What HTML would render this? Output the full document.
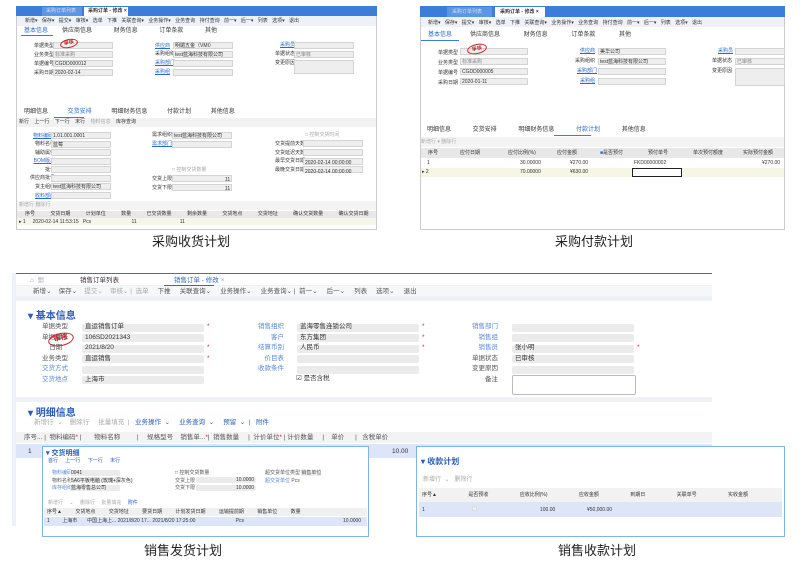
<!DOCTYPE html>
<html><head><meta charset="utf-8"><style>
*{margin:0;padding:0;box-sizing:border-box}
body{width:800px;height:565px;background:#fff;position:relative;overflow:hidden;font-family:"Liberation Sans","Noto Sans CJK SC",sans-serif;color:#333}
.a{position:absolute;white-space:nowrap}
.t{font-size:5px;line-height:7px}
.in{position:absolute;background:#eeeeee;border:1px solid #d4d4d4;height:7px}
.lk{color:#2a6acb;text-decoration:underline}
.cap{position:absolute;font-size:13px;color:#222;font-family:"Liberation Sans","Noto Sans CJK SC",sans-serif}
.s{font-size:6.5px;line-height:9px}
.in2{position:absolute;background:#ebebeb;border-radius:2px;height:8px}
.stamp{position:absolute;border:1.5px solid #c0262b;border-radius:50%;color:#c0262b;font-size:5px;font-weight:bold;text-align:center;transform:rotate(-12deg)}
</style></head><body>

<!-- Panel 1 -->
<div class="a" style="left:16px;top:6px;width:361px;height:224px;border:1px solid #ccc;background:#fff"></div>
<div class="a" style="left:16px;top:6px;width:361px;height:10px;background:#3b7dd8"></div>
<div class="a" style="left:42px;top:7px;width:40px;height:9px;background:#5b97e3"></div>
<div class="a t" style="left:46px;top:8px;color:#dde">采购订单列表</div>
<div class="a" style="left:84px;top:7px;width:44px;height:9px;background:#fff"></div>
<div class="a t" style="left:88px;top:8px;font-weight:bold">采购订单 - 修改 ×</div>
<div class="a" style="left:17px;top:16px;width:359px;height:10px;background:#eef2f8"></div>
<div class="a t" style="left:25px;top:18px;word-spacing:3px">新增▾ 保存▾ 提交▾ 审核▾ 选单 下推 关联查询▾ 业务操作▾ 业务查询 持付查询 前一▾ 后一▾ 列表 选项▾ 退出</div>
<div class="a" style="left:21px;top:35px;width:32px;height:1px;background:#3b7dd8"></div>
<div class="a t" style="left:24px;top:28px;color:#2a6acb;font-size:6px">基本信息</div>
<div class="a t" style="left:62px;top:28px;font-size:6px;word-spacing:20px">供应商信息 财务信息 订单条款 其他</div>
<div class="a t" style="left:34px;top:42px;line-height:9px;text-align:right">单据类型<br>业务类型<br>单据编号<br>采购日期</div>
<div class="in" style="left:53px;top:42px;width:60px"></div><div class="in" style="left:53px;top:51px;width:60px"></div><div class="in" style="left:53px;top:60px;width:60px"></div><div class="in" style="left:53px;top:69px;width:60px"></div>
<div class="a t" style="left:55px;top:52px;color:#888">标准采购</div><div class="a t" style="left:55px;top:61px">CGDD000012</div><div class="a t" style="left:55px;top:70px">2020-02-14</div>
<div class="stamp" style="left:60px;top:39px;width:18px;height:9px;line-height:7px">审核</div>
<div class="a t lk" style="left:155px;top:42px;line-height:9px">供应商</div><div class="a t" style="left:155px;top:51px">采购组织</div><div class="a t lk" style="left:155px;top:60px">采购部门</div><div class="a t lk" style="left:155px;top:69px">采购组</div>
<div class="in" style="left:173px;top:42px;width:60px"></div><div class="in" style="left:173px;top:51px;width:60px"></div><div class="in" style="left:173px;top:60px;width:60px"></div><div class="in" style="left:173px;top:69px;width:60px"></div>
<div class="a t" style="left:175px;top:43px">明媚五金（VMI）</div><div class="a t" style="left:175px;top:52px">test蓝海科技有限公司</div>
<div class="a t lk" style="left:280px;top:42px">采购员</div><div class="a t" style="left:275px;top:51px">单据状态</div><div class="a t" style="left:275px;top:60px">变更原因</div>
<div class="in" style="left:294px;top:42px;width:60px"></div><div class="in" style="left:294px;top:51px;width:60px"></div><div class="in" style="left:294px;top:60px;width:60px;height:14px"></div>
<div class="a t" style="left:296px;top:52px;color:#888">已审核</div>
<div class="a t" style="left:24px;top:109px;font-size:6px;word-spacing:18px">明细信息 <span style="color:#2a6acb">交货安排</span> 明细财务信息 付款计划 其他信息</div>
<div class="a" style="left:54px;top:117px;width:30px;height:1px;background:#3b7dd8"></div>
<div class="a" style="left:17px;top:118px;width:359px;height:9px;background:#f2f2f2"></div>
<div class="a t" style="left:19px;top:119px;word-spacing:4px">新行 上一行 下一行 末行 <span style="color:#aaa">物料信息</span> 库存查询</div>
<div class="a t lk" style="left:33px;top:132px;line-height:8.6px">物料编码</div>
<div class="a t" style="left:30px;top:140px;line-height:8.6px;text-align:right">物料名称<br>辅助属性<br><span class="lk">BOM版本</span><br>批号<br>供应商批号<br>货主组织<br><span class="lk">收料部门</span></div>
<div class="in" style="left:51px;top:132px;width:60px"></div><div class="in" style="left:51px;top:141px;width:60px"></div><div class="in" style="left:51px;top:149px;width:60px"></div><div class="in" style="left:51px;top:158px;width:60px"></div><div class="in" style="left:51px;top:166px;width:60px"></div><div class="in" style="left:51px;top:175px;width:60px"></div><div class="in" style="left:51px;top:183px;width:60px"></div><div class="in" style="left:51px;top:192px;width:60px"></div>
<div class="a t" style="left:53px;top:133px">1.01.001.0001</div><div class="a t" style="left:53px;top:142px">蓝莓</div><div class="a t" style="left:53px;top:184px">test蓝海科技有限公司</div>
<div class="a t" style="left:152px;top:132px">需求组织</div><div class="a t lk" style="left:152px;top:141px">需求部门</div>
<div class="in" style="left:172px;top:132px;width:60px"></div><div class="in" style="left:172px;top:141px;width:60px"></div>
<div class="a t" style="left:174px;top:133px">test蓝海科技有限公司</div>
<div class="a t" style="left:172px;top:167px;color:#aaa">□ 控制交货数量</div>
<div class="a t" style="left:152px;top:175px;line-height:8.6px">交货上限<br>交货下限</div>
<div class="in" style="left:172px;top:175px;width:60px"></div><div class="in" style="left:172px;top:184px;width:60px"></div>
<div class="a t" style="left:225px;top:176px;line-height:8.6px">11<br>11</div>
<div class="a t" style="left:305px;top:132px;color:#aaa">□ 控制交货时间</div>
<div class="a t" style="left:275px;top:140px;line-height:8.6px">交货提前天数<br>交货延迟天数<br>最早交货日期<br>最晚交货日期</div>
<div class="in" style="left:303px;top:140px;width:60px"></div><div class="in" style="left:303px;top:149px;width:60px"></div><div class="in" style="left:303px;top:158px;width:60px"></div><div class="in" style="left:303px;top:166px;width:60px"></div>
<div class="a t" style="left:305px;top:159px;line-height:8.6px">2020-02-14 00:00:00<br>2020-02-14 00:00:00</div>
<div class="a" style="left:17px;top:201px;width:359px;height:9px;background:#f4f4f4"></div>
<div class="a t" style="left:19px;top:202px;color:#aaa">新增行 删除行</div>
<div class="a" style="left:17px;top:211px;width:359px;height:7px;background:#e8e8e8"></div>
<div class="a t" style="left:25px;top:211px;word-spacing:14px">序号 交货日期 计划单位 数量 已交货数量 剩余数量 交货地点 交货地址 确认交货数量 确认交货日期</div>
<div class="a" style="left:17px;top:218px;width:359px;height:7px;background:#f6f6e8"></div>
<div class="a t" style="left:19px;top:219px">▸ 1 &nbsp; &nbsp; 2020-02-14 11:53:15 &nbsp; Pcs &nbsp; &nbsp; &nbsp; &nbsp; &nbsp; &nbsp; &nbsp; &nbsp; &nbsp; &nbsp; &nbsp; &nbsp; &nbsp; &nbsp; 11 &nbsp; &nbsp; &nbsp; &nbsp; &nbsp; &nbsp; &nbsp; &nbsp; &nbsp; &nbsp; &nbsp; &nbsp; &nbsp; &nbsp; &nbsp; 11</div>
<div class="cap" style="left:152px;top:231px">采购收货计划</div>

<!-- Panel 2 -->
<div class="a" style="left:420px;top:6px;width:365px;height:224px;border:1px solid #ccc;background:#fff"></div>
<div class="a" style="left:420px;top:6px;width:365px;height:11px;background:#3b7dd8"></div>
<div class="a" style="left:447px;top:7px;width:45px;height:10px;background:#5b97e3"></div>
<div class="a t" style="left:452px;top:9px;color:#dde">采购订单列表</div>
<div class="a" style="left:495px;top:7px;width:50px;height:10px;background:#fff"></div>
<div class="a t" style="left:500px;top:9px;font-weight:bold">采购订单 - 修改 ×</div>
<div class="a" style="left:421px;top:17px;width:363px;height:10px;background:#eef2f8"></div>
<div class="a t" style="left:428px;top:20px;word-spacing:3px">新增▾ 保存▾ 提交▾ 审核▾ 选单 下推 关联查询▾ 业务操作▾ 业务查询 持付查询 前一▾ 后一▾ 列表 选项▾ 退出</div>
<div class="a t" style="left:428px;top:32px;color:#2a6acb;font-size:6px">基本信息</div>
<div class="a" style="left:421px;top:40px;width:38px;height:1px;background:#3b7dd8"></div>
<div class="a t" style="left:470px;top:32px;font-size:6px;word-spacing:22px">供应商信息 财务信息 订单条款 其他</div>
<div class="a t" style="left:438px;top:48px;line-height:10px">单据类型<br>业务类型<br>单据编号<br>采购日期</div>
<div class="in" style="left:460px;top:48px;width:68px"></div><div class="in" style="left:460px;top:58px;width:68px"></div><div class="in" style="left:460px;top:68px;width:68px"></div><div class="in" style="left:460px;top:78px;width:68px"></div>
<div class="a t" style="left:462px;top:59px;color:#888">标准采购</div><div class="a t" style="left:462px;top:69px">CGDD000005</div><div class="a t" style="left:462px;top:79px">2020-01-11</div>
<div class="stamp" style="left:467px;top:44px;width:20px;height:10px;line-height:8px">审核</div>
<div class="a t lk" style="left:580px;top:48px">供应商</div><div class="a t" style="left:575px;top:58px">采购组织</div><div class="a t lk" style="left:577px;top:68px">采购部门</div><div class="a t lk" style="left:580px;top:78px">采购组</div>
<div class="in" style="left:598px;top:48px;width:68px"></div><div class="in" style="left:598px;top:58px;width:68px"></div><div class="in" style="left:598px;top:68px;width:68px"></div><div class="in" style="left:598px;top:78px;width:68px"></div>
<div class="a t" style="left:600px;top:49px">美华公司</div><div class="a t" style="left:600px;top:59px">test蓝海科技有限公司</div>
<div class="a t lk" style="left:718px;top:48px">采购员</div><div class="a t" style="left:712px;top:58px">单据状态</div><div class="a t" style="left:712px;top:68px">变更原因</div>
<div class="in" style="left:735px;top:48px;width:50px"></div><div class="in" style="left:735px;top:58px;width:50px"></div><div class="in" style="left:735px;top:68px;width:50px;height:18px"></div>
<div class="a t" style="left:737px;top:59px;color:#888">已审核</div>
<div class="a t" style="left:427px;top:127px;font-size:6px;word-spacing:20px">明细信息 交货安排 明细财务信息 <span style="color:#2a6acb">付款计划</span> 其他信息</div>
<div class="a" style="left:554px;top:135px;width:37px;height:1px;background:#3b7dd8"></div>
<div class="a" style="left:421px;top:137px;width:363px;height:10px;background:#f4f4f4"></div>
<div class="a t" style="left:421px;top:139px;color:#aaa">新增行 ▾ 删除行</div>
<div class="a" style="left:421px;top:148px;width:363px;height:10px;background:#e8e8e8"></div>
<div class="a t" style="left:428px;top:150px">序号</div>
<div class="a t" style="left:460px;top:150px">应付日期</div>
<div class="a t" style="left:508px;top:150px">应付比例(%)</div>
<div class="a t" style="left:557px;top:150px">应付金额</div>
<div class="a t" style="left:600px;top:150px"><span style="color:#2a6acb">■</span>是否预付</div>
<div class="a t" style="left:648px;top:150px">预付单号</div>
<div class="a t" style="left:693px;top:150px">单次预付额度</div>
<div class="a t" style="left:743px;top:150px">实际预付金额</div>
<div class="a" style="left:421px;top:159px;width:363px;height:9px;background:#fff"></div>
<div class="a t" style="left:427px;top:160px">1</div><div class="a t" style="left:520px;top:160px">30.00000</div><div class="a t" style="left:570px;top:160px">¥270.00</div><div class="a t" style="left:634px;top:160px">FKD00000002</div><div class="a t" style="left:762px;top:160px">¥270.00</div>
<div class="a" style="left:421px;top:168px;width:363px;height:9px;background:#f6f6e4"></div>
<div class="a t" style="left:422px;top:169px">▸ 2</div><div class="a t" style="left:520px;top:169px">70.00000</div><div class="a t" style="left:570px;top:169px">¥630.00</div>
<div class="a" style="left:632px;top:168px;width:50px;height:9px;border:1px solid #222;background:#fff"></div>
<div class="cap" style="left:555px;top:231px">采购付款计划</div>

<!-- Panel 3 -->
<div class="a" style="left:12px;top:273px;width:700px;height:253px;background:#eef1f6"></div>
<div class="a" style="left:16px;top:273px;width:696px;height:1px;background:#3b6fc8"></div>
<div class="a" style="left:16px;top:274px;width:696px;height:11px;background:#fff"></div>
<div class="a s" style="left:30px;top:276px;color:#999">⌂ &nbsp;▦</div>
<div class="a s" style="left:80px;top:276px">销售订单列表</div>
<div class="a s" style="left:174px;top:276px;color:#2a6acb">销售订单 - 修改 <span style="color:#999">×</span></div>
<div class="a" style="left:164px;top:285px;width:50px;height:1px;background:#2a6acb"></div>
<div class="a" style="left:16px;top:286px;width:696px;height:10px;background:#f6f7f9"></div>
<div class="a s" style="left:33px;top:287px;color:#555;word-spacing:0">新增⌄ &nbsp; &nbsp;保存⌄ &nbsp; &nbsp;<span style="color:#aaa">提交⌄ &nbsp; &nbsp;审核⌄ | &nbsp;选单</span> &nbsp; &nbsp; 下推 &nbsp; &nbsp; 关联查询⌄ &nbsp; &nbsp; 业务操作⌄ &nbsp; &nbsp; 业务查询⌄ | &nbsp;前一⌄ &nbsp; &nbsp; 后一⌄ &nbsp; &nbsp; 列表 &nbsp; &nbsp; 选项⌄ &nbsp; &nbsp; 退出</div>
<div class="a" style="left:16px;top:301px;width:696px;height:96px;background:#fff"></div>
<div class="a" style="left:28px;top:307px;font-size:10px;color:#2a5db8;font-weight:bold">▾ 基本信息</div>
<div class="a s" style="left:42px;top:322px;line-height:10.5px;color:#555">单据类型<br>单据编号<br>&nbsp; &nbsp; 日期<br>业务类型<br><span style="color:#5a8ad8">交货方式</span><br><span style="color:#5a8ad8">交货地点</span></div>
<div class="in2" style="left:82px;top:324px;width:122px"></div><div class="in2" style="left:82px;top:334px;width:122px"></div><div class="in2" style="left:82px;top:345px;width:122px"></div><div class="in2" style="left:82px;top:355px;width:122px"></div><div class="in2" style="left:82px;top:366px;width:122px"></div><div class="in2" style="left:82px;top:376px;width:122px"></div>
<div class="a s" style="left:85px;top:322px;line-height:10.5px">直运销售订单<br>106SD2021343<br>2021/8/20<br>直运销售<br><br>上海市</div>
<div class="a s" style="left:207px;top:322px;color:#d22;line-height:10.5px">*<br><br>*<br>*</div>
<div class="stamp" style="left:48px;top:333px;width:26px;height:13px;line-height:10px;font-size:7px">审核</div>
<div class="a s" style="left:258px;top:322px;line-height:10.5px;color:#5a8ad8;text-align:right">销售组织<br>客户<br>结算币别<br>价目表<br>收款条件</div>
<div class="in2" style="left:297px;top:324px;width:122px"></div><div class="in2" style="left:297px;top:334px;width:122px"></div><div class="in2" style="left:297px;top:345px;width:122px"></div><div class="in2" style="left:297px;top:355px;width:122px"></div><div class="in2" style="left:297px;top:366px;width:122px"></div>
<div class="a s" style="left:300px;top:322px;line-height:10.5px">蓝海零售连锁公司<br>东方集团<br>人民币</div>
<div class="a s" style="left:422px;top:322px;color:#d22;line-height:10.5px">*<br>*<br>*</div>
<div class="a s" style="left:296px;top:374px">☑ 是否含税</div>
<div class="a s" style="left:472px;top:322px;line-height:10.5px;color:#5a8ad8;text-align:right">销售部门<br>销售组<br>销售员<br><span style="color:#555">单据状态</span><br><span style="color:#555">变更原因</span><br><span style="color:#555">&nbsp; &nbsp; &nbsp;备注</span></div>
<div class="in2" style="left:512px;top:324px;width:122px"></div><div class="in2" style="left:512px;top:334px;width:122px"></div><div class="in2" style="left:512px;top:345px;width:122px"></div><div class="in2" style="left:512px;top:355px;width:122px"></div><div class="in2" style="left:512px;top:366px;width:122px"></div>
<div class="a s" style="left:515px;top:343px;line-height:10.5px">张小明<br>已审核</div>
<div class="a s" style="left:637px;top:343px;color:#d22">*</div>
<div class="a" style="left:512px;top:375px;width:124px;height:20px;border:1px solid #bbb;border-radius:2px;background:#fff"></div>
<div class="a" style="left:16px;top:402px;width:696px;height:124px;background:#fff"></div>
<div class="a" style="left:28px;top:404px;font-size:10px;color:#2a5db8;font-weight:bold">▾ 明细信息</div>
<div class="a s" style="left:34px;top:418px;color:#aaa">新增行 &nbsp;⌄ &nbsp; &nbsp;删除行 &nbsp; &nbsp; 批量填充 &nbsp;| &nbsp; <span style="color:#2a5db8">业务操作 &nbsp;⌄ &nbsp; &nbsp; 业务查询 &nbsp;⌄ &nbsp; &nbsp; 预留 &nbsp;⌄ &nbsp;| &nbsp; 附件</span></div>
<div class="a" style="left:16px;top:432px;width:696px;height:11px;background:#f3f3f3"></div>
<div class="a s" style="left:24px;top:433px;color:#555;word-spacing:0">序号... | &nbsp;物料编码<span style="color:#d22">*</span> | &nbsp; &nbsp; &nbsp; 物料名称 &nbsp; &nbsp; &nbsp; &nbsp; | &nbsp; &nbsp; 规格型号 &nbsp; &nbsp;销售单...<span style="color:#d22">*</span>| &nbsp;销售数量 &nbsp; &nbsp; | &nbsp;计价单位<span style="color:#d22">*</span> | 计价数量 &nbsp; &nbsp; | &nbsp; &nbsp;单价 &nbsp; &nbsp; &nbsp;| &nbsp; 含税单价</div>
<div class="a" style="left:16px;top:444px;width:696px;height:14px;background:#dde6f8"></div>
<div class="a s" style="left:28px;top:447px">1</div>
<div class="a s" style="left:392px;top:447px">10.00</div>

<!-- Overlay 1 -->
<div class="a" style="left:42px;top:446px;width:327px;height:91px;background:#fff;border:1px solid #7fb4e6"></div>
<div class="a" style="left:46px;top:448px;font-size:7px;color:#2a5db8;font-weight:bold">▾ 交货明细</div>
<div class="a t" style="left:48px;top:458px;color:#2a5db8;word-spacing:6px">首行 上一行 下一行 末行</div>
<div class="a t" style="left:52px;top:470px;line-height:7.5px;color:#5a8ad8">物料编码<br><span style="color:#555">物料名称</span><br>库存组织</div>
<div class="in2" style="left:70px;top:470px;width:50px;height:6px"></div><div class="in2" style="left:70px;top:477px;width:50px;height:6px"></div><div class="in2" style="left:70px;top:485px;width:50px;height:6px"></div>
<div class="a t" style="left:71px;top:470px;line-height:7.5px">0041<br>5A6平板电脑 (玫瑰+深灰色)<br>蓝海零售总公司</div>
<div class="a t" style="left:175px;top:470px;line-height:7.5px;color:#555">□ 控制交货数量<br>交货上限<br>交货下限</div>
<div class="in2" style="left:196px;top:477px;width:60px;height:6px"></div><div class="in2" style="left:196px;top:485px;width:60px;height:6px"></div>
<div class="a t" style="left:236px;top:477px;line-height:7.5px">10.0000<br>10.0000</div>
<div class="a t" style="left:265px;top:470px;line-height:7.5px;color:#555">超交货单位类型 <span style="background:#eee">销售单位</span><br><span style="color:#5a8ad8">超交货单位</span> Pcs</div>
<div class="a t" style="left:48px;top:500px;color:#aaa;word-spacing:5px">新增行 ⌄ 删除行 批量填充 <span style="color:#2a5db8">附件</span></div>
<div class="a" style="left:44px;top:508px;width:323px;height:8px;background:#f0f0f0"></div>
<div class="a t" style="left:47px;top:509px;word-spacing:12px">序号▲ 交货地点 交货地址 要货日期 计划发货日期 运输提前期 销售单位 数量</div>
<div class="a" style="left:44px;top:517px;width:323px;height:9px;background:#dde6f8"></div>
<div class="a t" style="left:47px;top:518px">1 &nbsp; &nbsp; &nbsp; &nbsp; 上海市 &nbsp; &nbsp; &nbsp; 中国上海上... 2021/8/20 17... 2021/8/20 17:25:00 &nbsp; &nbsp; &nbsp; &nbsp; &nbsp; &nbsp; &nbsp; &nbsp; &nbsp; &nbsp; &nbsp; &nbsp; &nbsp; &nbsp; Pcs</div>
<div class="a t" style="left:343px;top:518px">10.0000</div>
<div class="cap" style="left:144px;top:540px">销售发货计划</div>

<!-- Overlay 2 -->
<div class="a" style="left:416px;top:446px;width:369px;height:91px;background:#fff;border:1px solid #7fb4e6"></div>
<div class="a" style="left:421px;top:456px;font-size:8px;color:#2a5db8;font-weight:bold">▾ 收款计划</div>
<div class="a" style="left:423px;top:474px;font-size:6px;color:#aaa">新增行 &nbsp;⌄ &nbsp; 删除行</div>
<div class="a" style="left:419px;top:488px;width:363px;height:14px;background:#f2f2f2"></div>
<div class="a t" style="left:422px;top:492px;word-spacing:30px">序号▲ 是否预收 应收比例(%) 应收金额 到期日 关联单号 实收金额</div>
<div class="a" style="left:419px;top:502px;width:363px;height:15px;background:#dde6f8"></div>
<div class="a t" style="left:422px;top:507px">1</div><div class="a" style="left:472px;top:506px;width:5px;height:5px;background:#eee;border:1px solid #ddd"></div>
<div class="a t" style="left:540px;top:507px">100.00</div><div class="a t" style="left:587px;top:507px">¥50,000.00</div>
<div class="cap" style="left:558px;top:540px">销售收款计划</div>
</body></html>
